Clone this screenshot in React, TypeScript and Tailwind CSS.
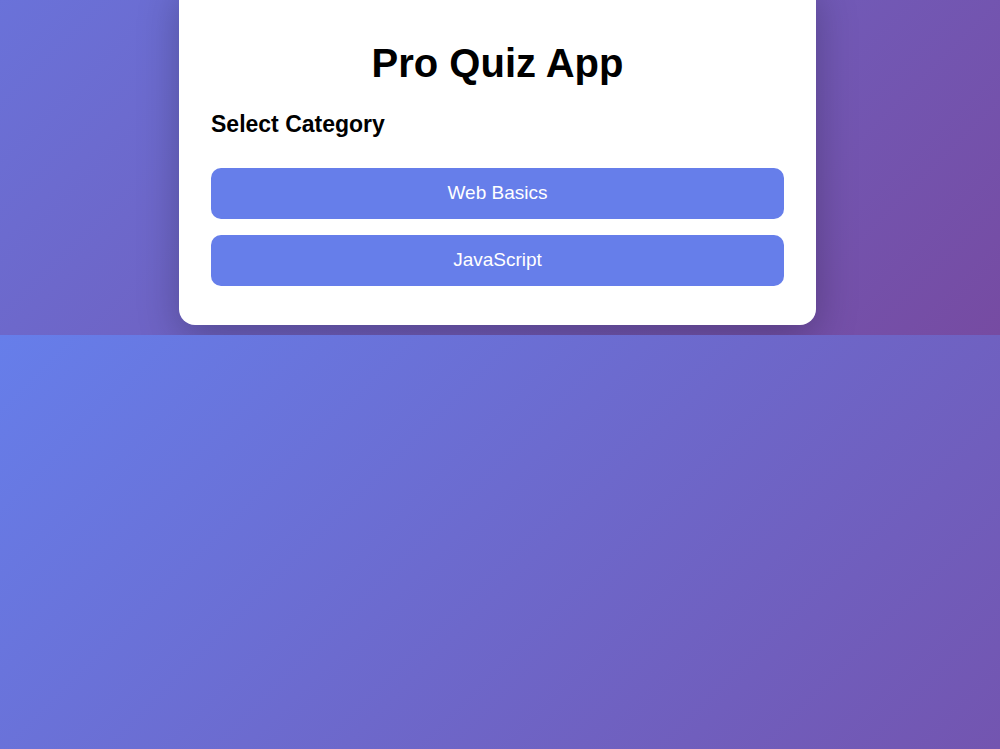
import React from "react";

export default function App() {
  const categories = ["Web Basics", "JavaScript"];
  return (
    <div
      className="w-[1000px] h-[749px] overflow-hidden flex flex-col"
      style={{ fontFamily: '"Liberation Sans", Arial, sans-serif' }}
    >
      <div className="h-[335px] shrink-0 overflow-hidden flex flex-col justify-end pb-[10px] bg-[linear-gradient(135deg,#667eea_0%,#764ba2_100%)] bg-[length:1000px_749px] bg-bottom bg-no-repeat">
        <div className="w-[637px] ml-[179px] shrink-0 bg-white rounded-[16px] shadow-[0_12px_40px_rgba(0,0,0,0.25)] px-[32px] pt-[61px] pb-[39px] flex flex-col">
          <h1 className="text-[40px] leading-[46px] font-bold text-black text-center">
            Pro Quiz App
          </h1>
          <h3 className="mt-[25px] text-[23px] leading-[27px] font-bold text-black">
            Select Category
          </h3>
          <div className="mt-[30px] flex flex-col gap-[16px]">
            {categories.map((c) => (
              <button
                key={c}
                className="h-[51px] w-full rounded-[10px] bg-[#667eea] text-white text-[19px] flex items-center justify-center"
              >
                {c}
              </button>
            ))}
          </div>
        </div>
      </div>
      <div className="flex-1 bg-[linear-gradient(135deg,#667eea_0%,#764ba2_100%)] bg-[length:1000px_749px] bg-top bg-no-repeat" />
    </div>
  );
}
